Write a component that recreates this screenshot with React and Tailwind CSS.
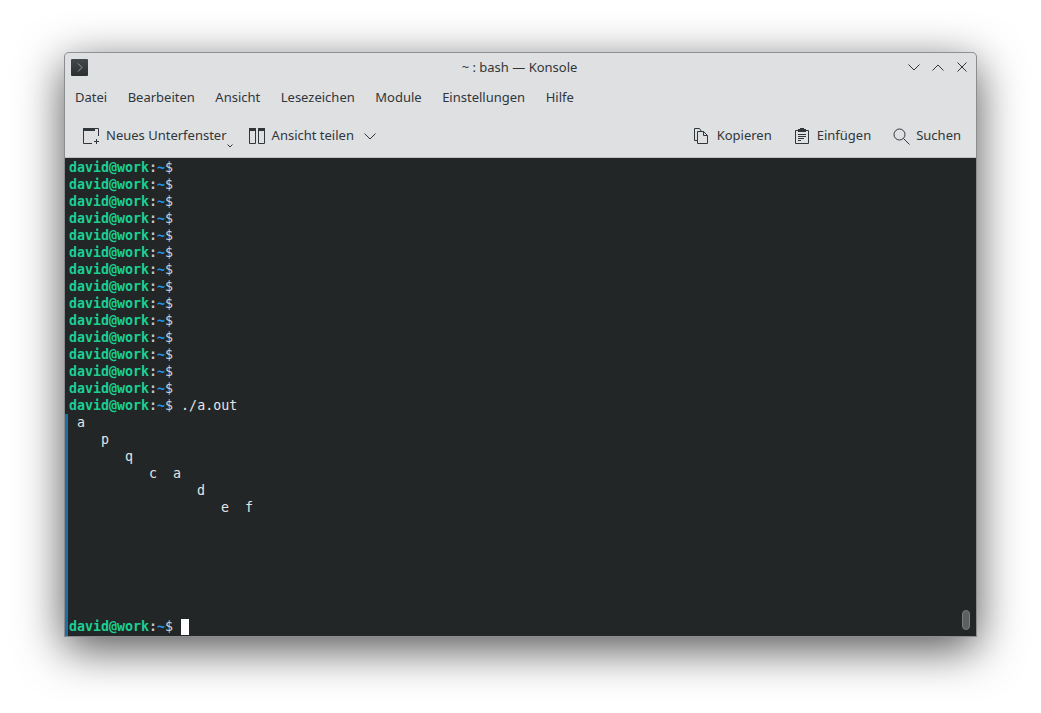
const MENU_ITEMS = ["Datei", "Bearbeiten", "Ansicht", "Lesezeichen", "Module", "Einstellungen", "Hilfe"];
const OUTPUT_LINES = [" a", "    p", "       q", "          c  a", "                d", "                   e  f"];

function Prompt({ children }) {
  return (
    <div className="h-[17px] whitespace-pre leading-[17px]">
      <span className="font-bold text-[#1ad094]">david@work</span>
      <span className="font-bold text-[#c8cacb]">:</span>
      <span className="font-bold text-[#1d99f3]">~</span>
      <span className="text-[#d0d2d3]">$</span>
      {children}
    </div>
  );
}

function NewTabIcon() {
  return (
    <svg width="18" height="18" viewBox="0 0 18 18" className="text-[#31363b]" fill="none" stroke="currentColor">
      <path d="M10 16.5H1.5V1.5H16.5V9" />
      <path d="M1 1h12v3H1z" fill="currentColor" stroke="none" />
      <path d="M12 14.5h5M14.5 12v5" />
    </svg>
  );
}

function SplitIcon() {
  return (
    <svg width="16" height="16" viewBox="0 0 16 16" className="text-[#31363b]" fill="none" stroke="currentColor">
      <path d="M.5 .5h6v15h-6zM9.5 .5h6v15h-6z" />
      <path d="M0 0h7v3H0zM9 0h7v3H9z" fill="currentColor" stroke="none" />
    </svg>
  );
}

function CopyIcon() {
  return (
    <svg width="15" height="16" viewBox="0 0 15 16" className="text-[#31363b]" fill="none" stroke="currentColor">
      <path d="M3.5 12.5H.5V.5h5l2 3" />
      <path d="M3.5 3.5h6l4 4v8h-10z" fill="#dee0e2" />
      <path d="M9.5 3.5v4h4" />
    </svg>
  );
}

function PasteIcon() {
  return (
    <svg width="14" height="16" viewBox="0 0 14 16" className="text-[#31363b]" fill="none" stroke="currentColor">
      <path d="M.5 2.5h13v13H.5z" />
      <path d="M3 1h8v3H3zM5 0h4v2H5z" fill="currentColor" stroke="none" />
      <path d="M3 6.5h8M3 8.5h8M3 10.5h6M3 12.5h3" />
    </svg>
  );
}

function SearchIcon() {
  return (
    <svg width="17" height="17" viewBox="0 0 17 17" className="text-[#31363b]" fill="none" stroke="currentColor">
      <circle cx="6.5" cy="6.5" r="5.5" />
      <path d="M10.5 10.5l6 6" />
    </svg>
  );
}

function Chevron({ up }) {
  return (
    <svg width="12" height="7" viewBox="0 0 12 7" className="text-[#31363b]" fill="none" stroke="currentColor">
      <path d={up ? "M.5 6.5L6 1l5.5 5.5" : "M.5 .5L6 6 11.5 .5"} />
    </svg>
  );
}

export default function App() {
  return (
    <div className="h-[713px] w-[1041px] overflow-hidden bg-white pl-[64px] pt-[52px] font-['Noto_Sans',sans-serif]">
      <div className="flex h-[585px] w-[913px] flex-col overflow-hidden rounded-t-[5px] rounded-b-[1px] border border-[#8a8c8e] border-t-[#8f9193] bg-[#dee0e2] shadow-[0_12px_46px_rgba(0,0,0,0.68)]">
        {/* title bar */}
        <div className="flex h-[28px] shrink-0 items-center pl-[6px] pr-[8px]">
          <div className="flex h-[17px] w-[17px] items-center justify-center rounded-[1px] bg-gradient-to-b from-[#43494b] to-[#2b3032]">
            <svg width="6" height="9" viewBox="0 0 6 9" fill="none" stroke="#9aa0a2">
              <path d="M1 .5L5 4.5 1 8.5" />
            </svg>
          </div>
          <div className="flex-1 pl-[43px] text-center text-[13px] leading-[28px] text-[#31363b]">~ : bash — Konsole</div>
          <div className="flex items-center gap-[12px]">
            <Chevron />
            <Chevron up />
            <svg width="10" height="10" viewBox="0 0 10 10" className="mx-[1px] text-[#31363b]" fill="none" stroke="currentColor">
              <path d="M.5 .5l9 9M9.5 .5l-9 9" />
            </svg>
          </div>
        </div>

        {/* menu bar */}
        <div className="flex h-[31px] shrink-0 items-center gap-[20.5px] pl-[10px] pt-[2px] text-[13px] text-[#31363b]">
          {MENU_ITEMS.map((item) => (
            <span key={item}>{item}</span>
          ))}
        </div>

        {/* toolbar */}
        <div className="flex h-[46px] shrink-0 items-center border-b border-[#bfc1c3] pl-[17px] pr-[15px] pt-[3px] text-[13px] text-[#31363b]">
          <NewTabIcon />
          <span className="ml-[6px]">Neues Unterfenster</span>
          <svg width="6" height="4" viewBox="0 0 6 4" className="mt-[20px] text-[#31363b]" fill="none" stroke="currentColor">
            <path d="M.5 .5L3 3 5.5 .5" />
          </svg>
          <span className="ml-[16px]"><SplitIcon /></span>
          <span className="ml-[7px]">Ansicht teilen</span>
          <span className="ml-[10px]"><Chevron /></span>
          <span className="ml-auto"><CopyIcon /></span>
          <span className="ml-[8px]">Kopieren</span>
          <span className="ml-[23px]"><PasteIcon /></span>
          <span className="ml-[8px]">Einfügen</span>
          <span className="ml-[22px]"><SearchIcon /></span>
          <span className="ml-[6px]">Suchen</span>
        </div>

        {/* terminal */}
        <div className="relative flex min-h-0 flex-1 flex-col bg-[#232627] pb-[1px] pl-[4px] pt-[1px] font-['DejaVu_Sans_Mono',monospace] text-[13.3px] text-[#e4e5e5]">
          {Array.from({ length: 14 }, (_, i) => (
            <Prompt key={i} />
          ))}
          <Prompt>{" ./a.out"}</Prompt>
          {OUTPUT_LINES.map((line, i) => (
            <div key={i} className="h-[17px] whitespace-pre leading-[17px]">{line}</div>
          ))}
          <div className="mt-auto">
            <Prompt>
              <span className="ml-[8px] inline-block h-[16px] w-[8px] translate-y-[1px] bg-white align-top" />
            </Prompt>
          </div>
          {/* prompt-jump marker for the last command's output */}
          <div className="absolute bottom-0 left-0 top-[256px] w-[3px] bg-[#1d6fa5]" />
          <div className="absolute bottom-[6px] right-[6px] h-[20px] w-[8px] rounded-full border border-[#7b7d7e] bg-[#5d5f60]" />
        </div>
      </div>
    </div>
  );
}
